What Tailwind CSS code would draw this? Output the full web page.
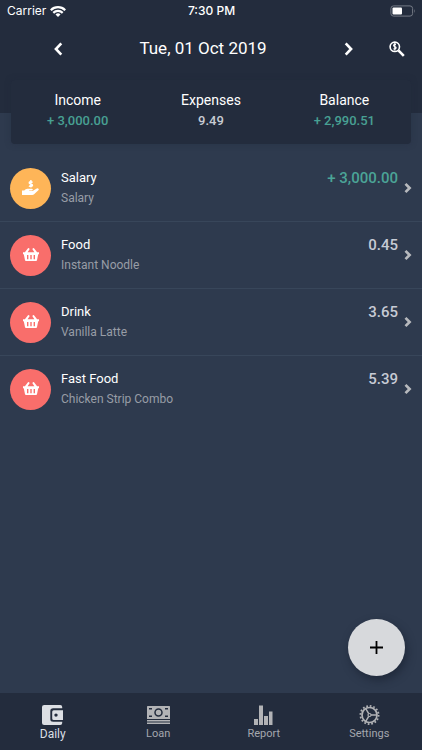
<!DOCTYPE html>
<html lang="en">
<head>
<meta charset="utf-8">
<meta name="viewport" content="width=device-width, initial-scale=1">
<title>Daily</title>
<script src="https://cdn.jsdelivr.net/npm/@tailwindcss/browser@4"></script>
</head>
<body class="bg-[#2e3a4e] font-['Roboto',sans-serif] text-white">
<svg class="hidden" aria-hidden="true">
  <symbol id="basket" viewBox="0 0 16 14"><path fill="currentColor" fill-rule="evenodd" d="M0 4.200h1.900L5 .3Q5.500-.1 6 .3L6.700 1 4.600 4.200h6.800L9.300 1 10 .3q.5-.4 1 0l3.100 3.900H16v2h-.8l-1.200 6q-.2.800-1 .800H3q-.8 0-1-.8l-1.200-6H0zM4 7v4.200h1.400V7zm3.300 0v4.200h1.400V7zm3.300 0v4.200H12V7z"/></symbol>
  <symbol id="chevron" viewBox="0 0 8 12"><path d="M1.500 1.900 5.600 6 1.500 10.100" fill="none" stroke="currentColor" stroke-width="2.700"/></symbol>
</svg>
<div class="flex min-h-screen flex-col">
  <header class="bg-[#232c3d]">
    <div class="grid h-[22px] grid-cols-3 items-center pl-[7px] pr-[6px] font-['Inter',sans-serif] text-xs">
      <div class="flex items-center gap-1"><span>Carrier</span>
        <svg class="h-[11px] w-4" viewBox="0 0 16 11" aria-label="Wi-Fi"><g fill="none" stroke="#fff" stroke-width="2.200"><path d="M.8 4.200a10.200 10.200 0 0 1 14.400 0M3.300 6.900a6.700 6.700 0 0 1 9.400 0"/></g><path fill="#fff" d="M8 11 5.500 8.500a3.600 3.600 0 0 1 5 0z"/></svg>
      </div>
      <div class="text-center font-medium">7:30 PM</div>
      <svg class="ml-auto h-3 w-[26px]" viewBox="0 0 26 12" aria-label="Battery"><rect x=".9" y=".9" width="21.700" height="10.200" rx="2.600" fill="none" stroke="#747a85"/><rect x="2.500" y="2.500" width="9.500" height="7" rx="1" fill="#fff"/><path d="M24 4q1.500 2 0 4z" fill="#747a85"/></svg>
    </div>
    <nav class="flex h-[53px] items-center pl-[42px] pr-[9px]">
      <button aria-label="Previous day" class="grid h-8 w-8 place-items-center"><svg class="h-[14px] w-[9px]" viewBox="0 0 9 14"><path d="M7.300 1.300 1.900 7l5.400 5.700" fill="none" stroke="#fff" stroke-width="2.600"/></svg></button>
      <h1 class="flex-1 text-center text-[17px]">Tue, 01 Oct 2019</h1>
      <button aria-label="Next day" class="grid h-8 w-8 place-items-center"><svg class="h-[14px] w-[9px]" viewBox="0 0 9 14"><path d="M1.700 1.300 7.100 7l-5.400 5.700" fill="none" stroke="#fff" stroke-width="2.600"/></svg></button>
      <button aria-label="Search" class="ml-[17px] grid h-8 w-8 place-items-center"><svg class="h-4 w-4" viewBox="0 0 16 16" fill="none" stroke="#fff"><circle cx="5.800" cy="5.800" r="4.700" stroke-width="1.600"/><path d="m9.400 9.400 5.400 5.400" stroke-width="2.600"/><path d="M7 3.300Q4.500 3 4.600 4.500c.1 1.300 2.500.9 2.500 2.300 0 1.200-1.400 1.400-2.700 1M5.800 2v7.500" stroke-width="1.200"/></svg></button>
    </nav>
    <dl class="relative mx-[11px] mt-[5px] -mb-[31px] grid grid-cols-3 rounded-[4px] bg-[#232c3d] pt-[10px] pb-[13px] text-center shadow-[0_0_6px_rgba(31,40,56,0.35)]">
      <div><dt class="text-sm leading-5">Income</dt><dd class="text-[13px] leading-[21px] font-medium text-[#48a093]">+ 3,000.00</dd></div>
      <div><dt class="text-sm leading-5">Expenses</dt><dd class="text-[13px] leading-[21px] font-medium text-[#c7cbd3]">9.49</dd></div>
      <div><dt class="text-sm leading-5">Balance</dt><dd class="text-[13px] leading-[21px] font-medium text-[#48a093]">+ 2,990.51</dd></div>
    </dl>
  </header>
  <main class="mt-[42px] flex-1">
    <ul>
      <li class="border-b border-[#38465a]"><a href="#" class="flex h-[66px] items-center pl-[10px] pr-[10px]">
        <span class="grid size-[41px] place-items-center rounded-full bg-[#feb558]"><svg class="h-[16px] w-[17px]" viewBox="0 0 17 16"><path fill="#fff" d="M0 10.500h2.200l1.500-1.200q.8-.6 1.800-.6h4.300q1 0 1 .9t-1 1H7.200v.5h3.400l3.700-2.400q1.300-.7 2.200.1.700.8-.4 1.700l-4 3.700q-.8.700-1.900.700H0z"/><path d="M10.600 2.300C9 1.500 7.200 1.600 7.200 2.900c0 1.500 3.300.8 3.300 2.400 0 1.300-2 1.500-3.600.6M8.900 0v7.500" fill="none" stroke="#fff" stroke-width="1.400"/></svg></span>
        <span class="ml-[10px] flex-1"><span class="block text-[13px] leading-5">Salary</span><span class="block text-xs leading-5 text-[#989da6]">Salary</span></span>
        <span class="mr-[6px] pb-5 text-[15px] leading-5 font-medium text-[#4ba497]">+ 3,000.00</span>
        <svg class="h-3 w-2 text-[#b7b9bd]"><use href="#chevron"/></svg></a></li>
      <li class="border-b border-[#38465a]"><a href="#" class="flex h-[66px] items-center pl-[10px] pr-[10px]">
        <span class="grid size-[41px] place-items-center rounded-full bg-[#f96e6b]"><svg class="h-[14px] w-4"><use href="#basket"/></svg></span>
        <span class="ml-[10px] flex-1"><span class="block text-[13px] leading-5">Food</span><span class="block text-xs leading-5 text-[#989da6]">Instant Noodle</span></span>
        <span class="mr-[6px] pb-5 text-[15px] leading-5 font-medium text-[#c7cbd5]">0.45</span>
        <svg class="h-3 w-2 text-[#b7b9bd]"><use href="#chevron"/></svg></a></li>
      <li class="border-b border-[#38465a]"><a href="#" class="flex h-[66px] items-center pl-[10px] pr-[10px]">
        <span class="grid size-[41px] place-items-center rounded-full bg-[#f96e6b]"><svg class="h-[14px] w-4"><use href="#basket"/></svg></span>
        <span class="ml-[10px] flex-1"><span class="block text-[13px] leading-5">Drink</span><span class="block text-xs leading-5 text-[#989da6]">Vanilla Latte</span></span>
        <span class="mr-[6px] pb-5 text-[15px] leading-5 font-medium text-[#c7cbd5]">3.65</span>
        <svg class="h-3 w-2 text-[#b7b9bd]"><use href="#chevron"/></svg></a></li>
      <li><a href="#" class="flex h-[66px] items-center pl-[10px] pr-[10px]">
        <span class="grid size-[41px] place-items-center rounded-full bg-[#f96e6b]"><svg class="h-[14px] w-4"><use href="#basket"/></svg></span>
        <span class="ml-[10px] flex-1"><span class="block text-[13px] leading-5">Fast Food</span><span class="block text-xs leading-5 text-[#989da6]">Chicken Strip Combo</span></span>
        <span class="mr-[6px] pb-5 text-[15px] leading-5 font-medium text-[#c7cbd5]">5.39</span>
        <svg class="h-3 w-2 text-[#b7b9bd]"><use href="#chevron"/></svg></a></li>
    </ul>
  </main>
  <button aria-label="Add transaction" class="fixed right-[17px] bottom-[74px] grid size-[57px] place-items-center rounded-full bg-[#d7d9dc] shadow-[2px_4px_9px_rgba(20,28,42,0.55)]"><svg class="h-[13px] w-[13px]" viewBox="0 0 13 13"><path d="M6.500 0v13M0 6.500h13" stroke="#000" stroke-width="1.800"/></svg></button>
  <nav class="sticky bottom-0 grid h-[57px] grid-cols-4 bg-[#232c3d] pt-3 text-center text-[11px] leading-[14px] text-[#a4a7ae]">
    <a href="#" class="flex flex-col items-center text-[#dcdfe4]">
      <svg class="h-5 w-[22px]" viewBox="0 0 22 20"><path fill="currentColor" d="M2.200 0h16q2 0 2 2v1.300h-9Q8.300 3.300 8.300 6v8.300q0 2.500 2.900 2.500h9V18q0 2-2 2h-16Q0 20 0 18V2Q0 0 2.200 0z"/><path fill="currentColor" fill-rule="evenodd" d="M11.700 5.200H21v9.700h-9.300q-1.500 0-1.500-1.500V6.700q0-1.500 1.500-1.500zM14 8.400a1.700 1.700 0 1 0 0 3.400 1.700 1.700 0 0 0 0-3.400z"/></svg>
      <span class="text-xs leading-[18px]">Daily</span></a>
    <a href="#" class="flex flex-col items-center">
      <svg class="h-5 w-[23px]" viewBox="0 0 23 20"><path fill="#b2b3b6" d="M.7 1h21.600q.7 0 .7.700V14H0V1.700Q0 1 .7 1zM0 15h23v1.400H0zm0 2.400h23V19H0z"/><path d="M2 3.800h3M2 11.200h3M18 3.800h3M18 11.200h3" stroke="#232c3d" stroke-width="1.600"/><circle cx="11.500" cy="7.500" r="3.500" fill="none" stroke="#232c3d" stroke-width="1.500"/></svg>
      <span class="leading-[18px]">Loan</span></a>
    <a href="#" class="flex flex-col items-center">
      <svg class="h-5 w-[19px]" viewBox="0 0 19 20"><path fill="#b2b3b6" d="M0 14h4v6H0zM5 .5h4V20H5zM10 11h4v9h-4zM15 6.500h3.500V20H15z"/></svg>
      <span class="leading-[18px]">Report</span></a>
    <a href="#" class="flex flex-col items-center">
      <svg class="h-5 w-[21px]" viewBox="0 0 21 20" fill="none" stroke="#b2b3b6"><circle cx="10.500" cy="10" r="9.100" stroke-width="1.800" stroke-dasharray="1.700 1.874"/><circle cx="10.500" cy="10" r="7.500" stroke-width="1.700"/><circle cx="10.500" cy="10" r="1.500" stroke-width="1.200"/><path d="M12 10h6M9.700 8.700l-3-5.200M9.700 11.300l-3 5.200" stroke-width="1.500"/></svg>
      <span class="leading-[18px]">Settings</span></a>
  </nav>
</div>
</body>
</html>
